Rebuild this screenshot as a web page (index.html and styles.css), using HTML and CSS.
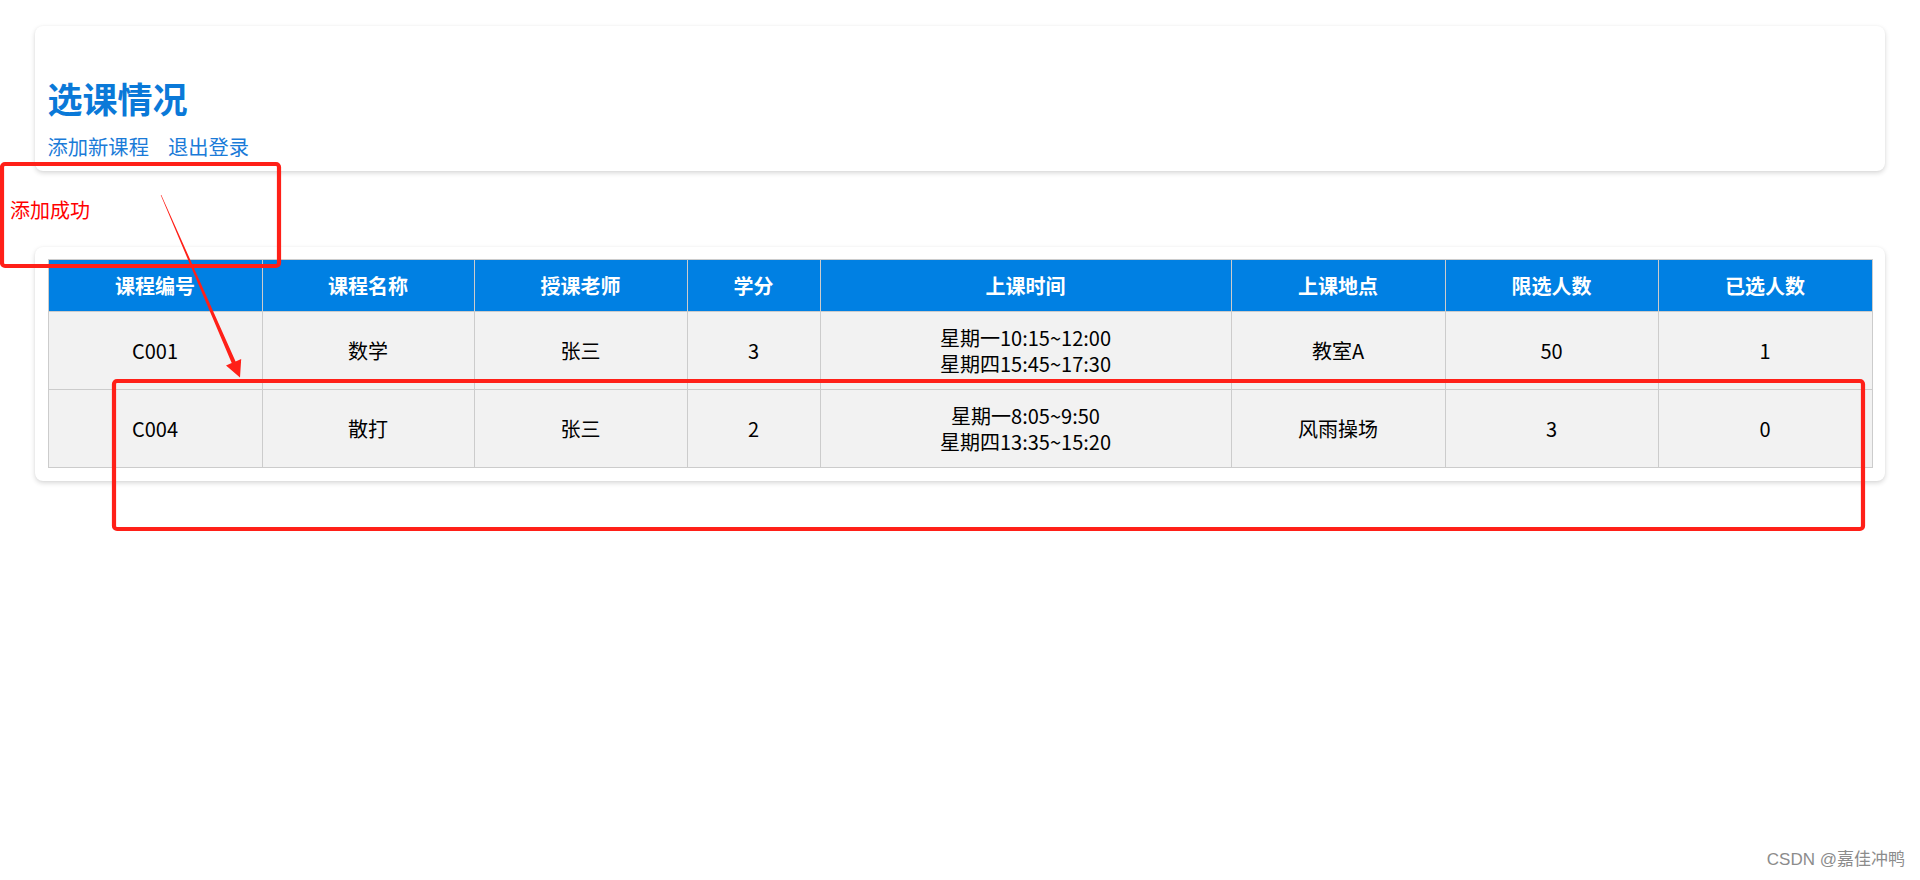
FILE: index.html
```html
<!DOCTYPE html>
<html lang="zh-CN">
<head>
<meta charset="utf-8">
<title>选课情况</title>
<link rel="stylesheet" href="styles.css">
</head>
<body>
<div class="page">
  <div class="card card-head">
    <h1 class="title">选课情况</h1>
    <div class="links">
      <a class="link" href="#">添加新课程</a>
      <a class="link" href="#">退出登录</a>
    </div>
  </div>

  <p class="msg">添加成功</p>

  <div class="card card-table">
    <table class="grid">
      <colgroup>
        <col class="w-id"><col class="w-name"><col class="w-teacher"><col class="w-credit">
        <col class="w-time"><col class="w-place"><col class="w-limit"><col class="w-count">
      </colgroup>
      <thead>
        <tr>
          <th>课程编号</th><th>课程名称</th><th>授课老师</th><th>学分</th>
          <th>上课时间</th><th>上课地点</th><th>限选人数</th><th>已选人数</th>
        </tr>
      </thead>
      <tbody>
        <tr>
          <td>C001</td><td>数学</td><td>张三</td><td>3</td>
          <td>星期一10:15~12:00<br>星期四15:45~17:30</td><td>教室A</td><td>50</td><td>1</td>
        </tr>
        <tr>
          <td>C004</td><td>散打</td><td>张三</td><td>2</td>
          <td>星期一8:05~9:50<br>星期四13:35~15:20</td><td>风雨操场</td><td>3</td><td>0</td>
        </tr>
      </tbody>
    </table>
  </div>
</div>

<svg class="marks" width="1920" height="880" viewBox="0 0 1920 880">
  <rect x="2" y="164" width="277" height="102" rx="3" fill="none" stroke="#ff2018" stroke-width="4.2"/>
  <rect x="114" y="381" width="1749" height="148" rx="3" fill="none" stroke="#ff2018" stroke-width="4.2"/>
  <polygon fill="#ff2018" points="160.7,195.1 161.3,194.9 235.6,361.4 241.2,359 240,377.5 226,365.6 231.7,363.1"/>
</svg>

<div class="watermark">CSDN @嘉佳冲鸭</div>
</body>
</html>
```

FILE: styles.css
```css
html, body {
  margin: 0;
  padding: 0;
  background: #ffffff;
}

body {
  font-family: "Noto Sans CJK SC", "Microsoft YaHei", "Liberation Sans", sans-serif;
  font-size: 20px;
  line-height: 1.32;
  color: #000;
  width: 1920px;
  height: 880px;
  overflow: hidden;
  position: relative;
}

.page {
  padding: 10px;
}

.card {
  margin: 0 25px;
  padding: 12.5px;
  background: #ffffff;
  border-radius: 8px;
  box-shadow: 0 2px 5px rgba(0, 0, 0, 0.16), 0 0 2px rgba(0, 0, 0, 0.04);
}

.card-head {
  margin-top: 16px;
}

.title {
  margin: 36.5px 0 11.5px;
  font-size: 35px;
  font-weight: 700;
  line-height: 46px;
  color: #0a79d8;
}

.links {
  display: flex;
  gap: 19px;
  line-height: 26.4px;
  font-size: 20.3px;
}

.link {
  color: #1a7bd8;
  text-decoration: none;
}

.msg {
  margin: 26px 0 23px;
  color: #ff0000;
  line-height: 26.4px;
}

.grid {
  width: 100%;
  border-collapse: collapse;
  table-layout: fixed;
}

.w-id { width: 214px; }
.w-name { width: 212px; }
.w-teacher { width: 213px; }
.w-credit { width: 133px; }
.w-time { width: 411px; }
.w-place { width: 214px; }
.w-limit { width: 213px; }
.w-count { width: 214px; }

.grid th,
.grid td {
  border: 1px solid #cccccc;
  padding: 12.5px;
  text-align: center;
  line-height: 26px;
}

.grid th {
  background: #0080e3;
  color: #ffffff;
  font-weight: 700;
}

.grid td {
  background: #f2f2f2;
  color: #000;
}

.marks {
  position: absolute;
  left: 0;
  top: 0;
  pointer-events: none;
}

.watermark {
  position: absolute;
  right: 15px;
  top: 849px;
  font-family: "Liberation Sans", "Noto Sans CJK SC", sans-serif;
  font-size: 17px;
  line-height: 22px;
  color: #8c8c8c;
}
```
